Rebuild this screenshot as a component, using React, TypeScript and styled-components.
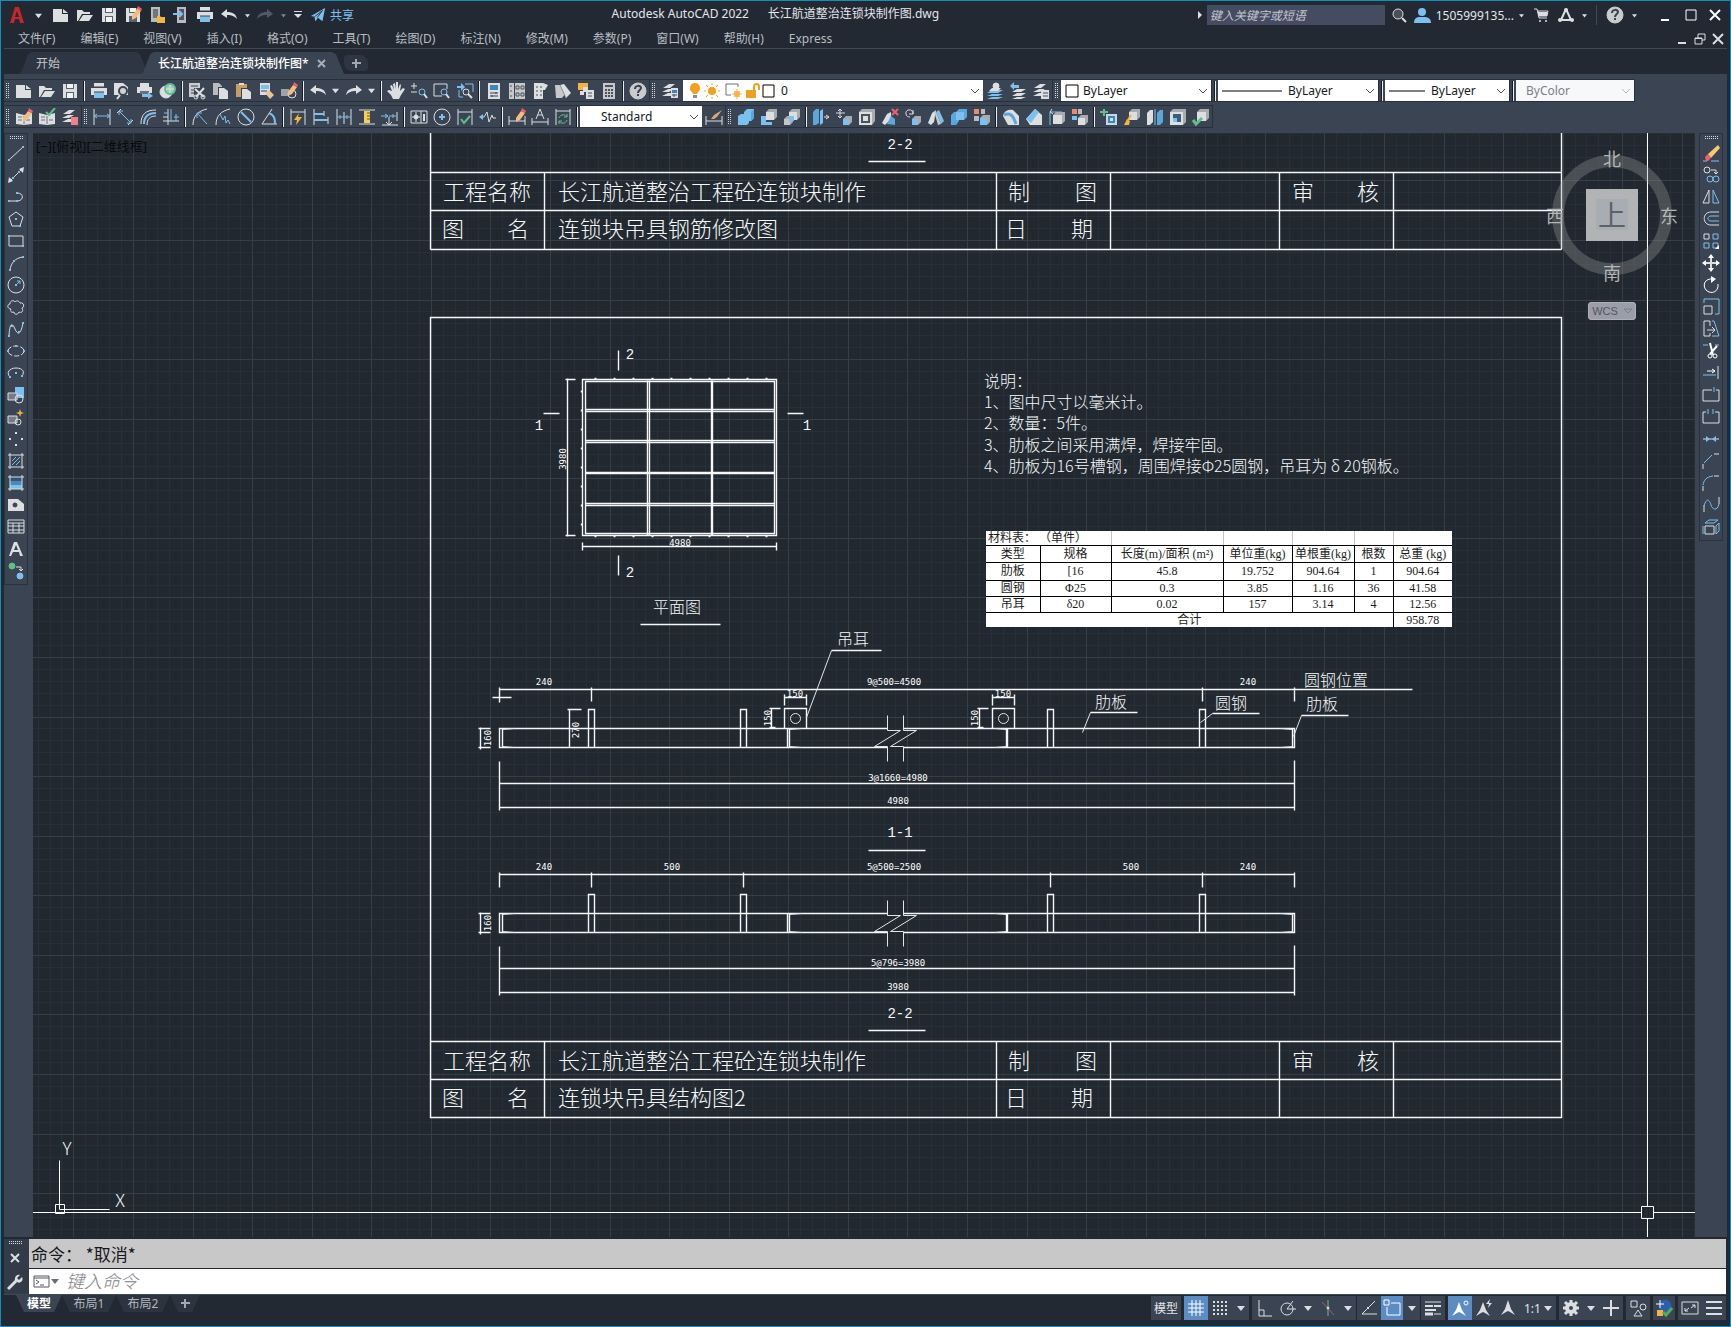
import React, { ReactNode } from "react";
import styled, { createGlobalStyle } from "styled-components";

const UI = `"Noto Sans", "Noto Sans CJK SC", sans-serif`;
const CAD = `"Noto Sans CJK SC", sans-serif`;
const SONG = `"Liberation Serif", "Noto Sans CJK SC", serif`;
const MARK = `"Liberation Mono", monospace`;
const DIM = `"DejaVu Sans Mono", monospace`;
const W = "#dcdee0";
const B = "#7cc0f0";
const O = "#f5b342";
const G = "#5fc08a";
const R = "#f0606a";
const PANEL = "#3b4453";
const DARK = "#222933";

const Global = createGlobalStyle`
  *, *::before, *::after { box-sizing: border-box; }
  body { margin: 0; background: ${DARK}; font-family: ${UI}; font-size: 12px; }
  button, input, select { font: inherit; color: inherit; border: 0; padding: 0; margin: 0; background: none; }
  button { display: inline-flex; align-items: center; justify-content: center; cursor: pointer; }
`;

/* ---------- window frame ---------- */

const Shell = styled.div`
  display: flex;
  flex-direction: column;
  min-height: 100vh;
  padding: 0 3px;
  border: 1px solid #1a8cba;
  background: ${DARK};
  color: #e4e6e8;
`;
const TitleBar = styled.header`
  display: flex;
  align-items: center;
  height: 28px;
`;
const QuickAccess = styled.div`
  display: flex;
  align-items: center;
  padding-left: 2px;
`;
const QuickButton = styled.button<{ $w?: number }>`
  width: ${(p) => p.$w ?? 24}px;
  height: 24px;
`;
const ShareButton = styled.button`
  gap: 4px;
  height: 24px;
  padding-left: 3px;
  color: ${B};
`;
const Caption = styled.h1`
  flex: 1;
  margin: 0;
  text-align: center;
  font-size: 12px;
  font-weight: 400;
  line-height: 20px;
  white-space: pre;
  padding-bottom: 2px;
`;
const TitleRight = styled.div`
  display: flex;
  align-items: center;
`;
const SearchBox = styled.input`
  width: 178px;
  height: 20px;
  margin: 0 2px 0 4px;
  padding: 0 3px;
  background: #434c60;
  font-style: italic;
  color: #e4e6e8;
  &::placeholder { color: #c3c7cf; opacity: 1; }
`;
const UserName = styled.button`
  height: 24px;
  padding-left: 1px;
`;
const Divider = styled.span`
  width: 1px;
  height: 20px;
  margin: 0 6px;
  background: #414955;
`;
const MenuRow = styled.div`
  display: flex;
  align-items: center;
  justify-content: space-between;
  height: 20px;
  border-bottom: 1px solid #414955;
`;
const Menus = styled.nav`
  display: flex;
  gap: 25px;
  padding-left: 14px;
  color: #b9bdc2;
`;
const MenuItem = styled.button`
  height: 18px;
  line-height: 18px;
`;
const DocControls = styled.div`
  display: flex;
`;
const DocButton = styled.button`
  width: 18px;
  height: 18px;
`;

/* ---------- document tabs ---------- */

const TabStrip = styled.div`
  display: flex;
  align-items: flex-end;
  height: 25px;
  padding-left: 14px;
`;
const FileTab = styled.div<{ $active?: boolean; $w: number }>`
  display: flex;
  align-items: center;
  gap: 8px;
  width: ${(p) => p.$w}px;
  height: 22px;
  margin-right: -8px;
  padding-left: 18px;
  background: ${(p) => (p.$active ? PANEL : "#2e3643")};
  color: ${(p) => (p.$active ? "#ffffff" : "#c3c7cc")};
  font-weight: ${(p) => (p.$active ? 500 : 400)};
  clip-path: polygon(0 100%, 3px 94%, 10px 10%, 14px 0, calc(100% - 12px) 0, calc(100% - 8px) 10%, 100% 100%);
`;
const AddTab = styled.button`
  width: 24px;
  height: 16px;
  margin: 0 0 3px 8px;
  border-radius: 4px 8px 4px 8px;
  background: #2e3643;
`;

/* ---------- toolbars ---------- */

const ToolbarArea = styled.div`
  display: flex;
  flex-direction: column;
  gap: 3px;
  padding: 5px 0;
  background: ${PANEL};
`;
const ToolbarRow = styled.div`
  display: flex;
  height: 23px;
`;
const Bar = styled.div`
  display: flex;
  align-items: center;
  height: 23px;
  border: 1px solid #28303c;
  border-left: 0;
`;
const Grip = styled.span<{ $flat?: boolean }>`
  flex: none;
  width: ${(p) => (p.$flat ? 13 : 4)}px;
  height: ${(p) => (p.$flat ? 4 : 15)}px;
  margin: ${(p) => (p.$flat ? "2px auto 2px" : "0 2px")};
  background:
    repeating-linear-gradient(90deg, transparent 0 1px, ${PANEL} 1px 2px),
    repeating-linear-gradient(#d4d8dd 0 1px, transparent 1px 2px);
`;
const Split = styled.span`
  flex: none;
  width: 2px;
  height: 20px;
  margin: 0 2px;
  background: linear-gradient(90deg, #171c24 1px, #eceef0 1px);
`;
const ToolButton = styled.button<{ $w?: number }>`
  flex: none;
  width: ${(p) => p.$w ?? 23}px;
  height: 21px;
`;
const Combo = styled.label<{ $w: number; $off?: boolean; $gap?: number }>`
  display: flex;
  align-items: center;
  gap: ${(p) => p.$gap ?? 4}px;
  width: ${(p) => p.$w}px;
  height: 21px;
  padding: 0 4px;
  background: ${(p) => (p.$off ? "#f7f8f9" : "#ffffff")};
  color: ${(p) => (p.$off ? "#7b7f85" : "#16181c")};
  button + & { margin-left: 2px; }
  & > svg { flex: none; }
`;
const Picker = styled.select<{ $pad?: number }>`
  flex: 1;
  min-width: 0;
  height: 20px;
  padding-left: ${(p) => p.$pad ?? 0}px;
  appearance: none;
  outline: 0;
  opacity: 1;
`;

/* ---------- work area ---------- */

const Work = styled.main`
  display: flex;
  flex: 1;
  background: ${PANEL};
`;
const SideStrip = styled.div<{ $w: number; $inset?: number }>`
  flex: none;
  width: ${(p) => p.$w}px;
  padding-left: ${(p) => p.$inset ?? 0}px;
`;
const SideBar = styled.div`
  display: flex;
  flex-direction: column;
  align-items: center;
  width: 24px;
  padding-bottom: 2px;
  border: 1px solid #2a323e;
`;
const SideButton = styled.button`
  width: 22px;
  height: 22px;
`;
const Canvas = styled.section`
  position: relative;
  flex: 1;
  min-height: 1104px;
  overflow: hidden;
  background: #212830;
`;
const Sheet = styled.svg`
  position: absolute;
  inset: 0;
  width: 100%;
  height: 100%;
`;
const CadLabel = styled.text<{ $size: number }>`
  font-family: ${CAD};
  font-size: ${(p) => p.$size}px;
  font-weight: 300;
  fill: #f6f7f8;
  white-space: pre;
`;
const MarkLabel = styled.text`
  font-family: ${MARK};
  font-size: 14px;
  fill: #f6f7f8;
`;
const DimLabel = styled.text`
  font-family: ${DIM};
  font-size: 9px;
  fill: #ffffff;
`;
const ViewLabel = styled.div`
  position: absolute;
  left: 3px;
  top: 4px;
  font-size: 13px;
  line-height: 18px;
  color: #07090c;
`;
const ViewCube = styled.div`
  position: absolute;
  top: 12px;
  right: 16px;
  display: flex;
  flex-direction: column;
  align-items: center;
  width: 134px;
`;
const WcsButton = styled.button`
  gap: 6px;
  width: 48px;
  height: 18px;
  margin-top: 14px;
  border-radius: 4px;
  background: #9b9da8;
  box-shadow: inset 0 0 0 1px #aeb0ba;
  color: #54565f;
  font-family: "Liberation Sans", sans-serif;
  font-size: 11px;
`;

const MaterialTable = styled.table`
  position: absolute;
  left: 953px;
  top: 398px;
  width: 466px;
  border-collapse: collapse;
  table-layout: fixed;
  background: #ffffff;
  color: #1c1c1c;
  font-family: ${SONG};
  font-size: 12px;
  line-height: 12px;
`;
const Row = styled.tr<{ $h: number }>`
  height: ${(p) => p.$h}px;
`;
const Cell = styled.td<{ $head?: boolean; $last?: boolean }>`
  padding: ${(p) => (p.$head ? "0 0 0 2px" : "0")};
  font-weight: 400;
  text-align: ${(p) => (p.$head ? "left" : "center")};
  white-space: nowrap;
  overflow: visible;
  border-left: 1px solid ${(p) => (p.$head ? "#c4c4c4" : "#000000")};
  border-bottom: ${(p) => (p.$last ? 0 : 1)}px solid #000000;
  &:first-child { border-left: 0; }
`;

/* ---------- command line & status ---------- */

const CommandPanel = styled.div`
  display: grid;
  grid-template-columns: 25px 1fr;
  margin-top: 2px;
  padding-right: 1px;
  background: ${DARK};
`;
const CommandSide = styled.div`
  display: flex;
  flex-direction: column;
  align-items: center;
  padding-right: 3px;
  background: #333b48;
`;
const SideTool = styled.button<{ $h: number }>`
  width: 22px;
  height: ${(p) => p.$h}px;
`;
const History = styled.output`
  display: block;
  height: 29px;
  padding-left: 2px;
  background: #c8c8c8;
  color: #16181b;
  font-size: 17px;
  line-height: 29px;
  font-family: "Noto Sans CJK SC", sans-serif;
  white-space: pre;
`;
const Prompt = styled.label`
  display: flex;
  align-items: center;
  gap: 4px;
  height: 25px;
  margin-top: 1px;
  padding-left: 4px;
  background: #ffffff;
`;
const CommandInput = styled.input`
  flex: 1;
  height: 24px;
  padding-left: 3px;
  padding-bottom: 3px;
  outline: 0;
  color: #16181b;
  font-size: 18px;
  line-height: 20px;
  font-style: italic;
  font-family: "Noto Sans CJK SC", sans-serif;
  &::placeholder { color: #808286; opacity: 1; font-weight: 300; }
`;
const Footer = styled.footer`
  display: flex;
  justify-content: space-between;
  height: 32px;
  border-top: 1px solid #414955;
`;
const LayoutTabs = styled.div`
  display: flex;
  padding-left: 12px;
`;
const LayoutTab = styled.button<{ $active?: boolean; $w: number }>`
  width: ${(p) => p.$w}px;
  height: 17px;
  line-height: 16px;
  background: ${(p) => (p.$active ? PANEL : "#2c3440")};
  color: ${(p) => (p.$active ? "#ffffff" : "#b4b8bd")};
  font-weight: ${(p) => (p.$active ? 700 : 400)};
  clip-path: polygon(0 0, 100% 0, calc(100% - 8px) 100%, 8px 100%);
`;
const Status = styled.div`
  display: flex;
  gap: 3px;
  padding-top: 1px;
  padding-right: 1px;
`;
const StatusGroup = styled.div<{ $tight?: boolean }>`
  display: flex;
  height: 24px;
  margin-left: ${(p) => (p.$tight ? -2 : 0)}px;
  background: ${PANEL};
`;
const StatusButton = styled.button<{ $w?: number; $on?: boolean }>`
  width: ${(p) => p.$w ?? 24}px;
  height: 24px;
  background: ${(p) => (p.$on ? "#5b8cc4" : "transparent")};
`;

/* ---------- icons ---------- */

const S = ({ d, c = W, w = 1 }: { d: string; c?: string; w?: number }) => (
  <path d={d} fill="none" stroke={c} strokeWidth={w} />
);
const F = ({ d, c = W }: { d: string; c?: string }) => <path d={d} fill={c} />;
const C = ({ x, y, r, c = W, f = "none", w = 1 }: { x: number; y: number; r: number; c?: string; f?: string; w?: number }) => (
  <circle cx={x} cy={y} r={r} stroke={c} fill={f} strokeWidth={w} />
);
const Dots = ({ at, c = B }: { at: number[][]; c?: string }) => (
  <>{at.map(([x, y]) => <rect key={`${x}-${y}`} x={x - 1} y={y - 1} width={2} height={2} fill={c} />)}</>
);
const Cube = ({ x, y, s, c = W, e = "#a9abad" }: { x: number; y: number; s: number; c?: string; e?: string }) => (
  <>
    <path d={`M${x} ${y + 3}l3-3h${s}v${s}l-3 3h-${s}z`} fill={e} />
    <path d={`M${x} ${y + 3}h${s}v${s}h-${s}z`} fill={c} />
  </>
);
const Pencil = () => (
  <>
    <F d="M8 10l5-7 4 2-5 7-4 2z" c="#f4bd7c" />
    <F d="M13 3l1-3 4 3-1 2z" c={R} />
  </>
);
const folder = "M1 15V4h5l2 2h6v2H6l-4 7zM3 15l4-6h10l-4 6z";
const floppy = "M2 2h14v14H2z";
const sheets = "M2 6l6-4h6l-5 4zM1 10l6-3h6l-5 3H1zM1 14l6-3h4v3H1z";

const icons: Record<string, ReactNode> = {
  new: <><F d="M1 3h9v5h6v8H1z" /><F d="M11 3l5 4h-5z" /></>,
  open: <F d={folder} />,
  save: <><F d={floppy} /><F d="M5 2h8v5H5zM5 10h8v6H5z" c="#5a616b" /><F d="M6 2h6v4H6zM6 11h6v5H6z" c="#f2f3f4" /></>,
  saveAs: <><F d={floppy} /><F d="M5 2h8v5H5zM5 10h8v6H5z" c="#5a616b" /><F d="M6 2h6v4H6z" c="#f2f3f4" /><Pencil /></>,
  phoneOpen: <><F d="M3 1h9v15H3z" c="#b9bbbe" /><F d="M5 3h5v9H5z" c="#70757c" /><F d="M9 10h3l1 1h4v6H9z" c={O} /></>,
  phoneIn: <><F d="M5 1h9v16H5z" c="#b9bbbe" /><F d="M7 3h5v11H7z" c="#50565f" /><S d="M1 8h9M7 5l3 3-3 3" c={B} w={2} /></>,
  print: <><F d="M4 1h10v4H4zM1 6h16v7H1z" /><F d="M4 10h10v6H4z" c={B} /><S d="M4 5h10M4 10h10" c="#3b4453" /></>,
  undo: <F d="M7 3v3c6 0 9 2 10 7-3-3-5-4-10-4v3L1 8z" />,
  redo: <F d="M11 3v3C5 6 2 8 1 13c3-3 5-4 10-4v3l6-4z" />,
  redoOff: <F d="M11 3v3C5 6 2 8 1 13c3-3 5-4 10-4v3l6-4z" c="#525964" />,
  plane: <><F d="M1 10L17 1l-3 15-5-4-3 4-1-5z" c={B} /><S d="M5 11l9-7-6 8" c={DARK} /></>,
  preview: <><F d="M1 1h9l5 4v8H1z" /><C x={10} y={9} r={4} c="#3b4453" f="#cfd1d3" w={2} /><S d="M7 13l-3 4" w={2} /></>,
  publish: <><F d="M4 1h9v4H4zM1 5h15v6H1z" /><F d="M4 9h9v3H4z" c="#6a7078" /><F d="M6 12h6v-2l5 4-5 3v-2H6z" c={B} /></>,
  globe: <><C x={7} y={10} r={6} f={W} /><C x={11} y={7} r={5} c={G} f="#8ed0d8" w={2} /><S d="M7 7h8M11 3v8" c="#f2e6a0" /></>,
  cut: <><F d="M1 1h11v5H6v9H1z" c="#c9cbcd" /><S d="M3 4h7M3 8h3M3 11h3" c="#3b4453" /><S d="M7 7l9 8M16 6l-8 9" w={2} /><C x={8} y={15} r={2} /><C x={15} y={15} r={2} /></>,
  copy: <><F d="M2 1h6l3 3v1H7v8H2z" c="#b9bbbe" /><F d="M8 6h5l4 3v8H8z" /></>,
  paste: <><F d="M2 2h11v4H7v9H2z" c="#c89c62" /><F d="M5 1h5v2H5z" /><F d="M8 7h5l4 3v7H8z" /></>,
  match: <><F d="M3 1h10v12H3z" /><F d="M4 3h8v4H4z" c={B} /><S d="M4 9h6" c="#3b4453" /><F d="M8 11l4-3 5 5-4 4z" c="#e9c590" /></>,
  block: <><F d="M1 7h8v7H1z" c="#9fa3a8" /><C x={12} y={12} r={4} /><Pencil /></>,
  hand: <F d="M5 9L3 4l2-1 2 5L6 2l2-1 1 6V0h2l0 7 2-5 1 1-1 6 3-3 2 1-4 6-2 4H6l-2-4-4-4 2-1z" />,
  zoomPm: <><S d="M1 4h6M4 1v6M1 10h6" /><C x={12} y={10} r={3} c={B} /><S d="M14 12l3 4" w={2} /></>,
  zoomWin: <><S d="M14 7V2H1v12h8" /><C x={11} y={10} r={3} c={B} /><S d="M13 12l3 4" w={2} /></>,
  zoomPrev: <><S d="M9 2h8v8M3 8v7h4" c={B} /><F d="M9 5L5 1v3H1v2h4v3z" c={B} /><C x={10} y={10} r={3} /><S d="M12 12l4 4" w={2} /></>,
  props: <><F d="M3 1h12v16H3z" /><F d="M5 3h8v5H5z" c="#3c86b8" /><S d="M5 11h8M5 14h8M11 10v2M7 13v2" c="#3b4453" /></>,
  design: <><F d="M1 1h5v16H1zM7 1h10v16H7z" c="#c6c8ca" /><S d="M8 4h3v3H8zM13 4h3v3h-3zM8 11h3v3H8zM13 11h3v3h-3zM3 3v2M3 8v2M3 13v2" c="#4b525d" /></>,
  palettes: <><F d="M3 1h9l5 2-3 5h-2v9H3z" /><S d="M5 5h2M9 5h2M5 9h2M9 9h2M5 13h2M9 13h2" c="#4b525d" /></>,
  sheetset: <><F d="M1 3h6l4 9-3 4H2z" c="#c6c8ca" /><F d="M6 3l4-1 7 9-5 5z" /><S d="M6 3l6 13" c="#8c9096" /></>,
  markup: <><F d="M1 1h10v7H1z" c={O} /><F d="M3 9h4v4H3zM6 5h5v5H6z" /><F d="M9 8h8v9H9z" /><S d="M11 11h4M11 14h4" c="#4b525d" /></>,
  calc: <><F d="M3 1h12v16H3z" c="#c6c8ca" /><S d="M5 4h8" c="#4b525d" w={2} /><S d="M5 8h2M8 8h2M11 8h2M5 11h2M8 11h2M11 11h2M5 14h2M8 14h2M11 14h2" c="#4b525d" w={2} /></>,
  help: <><C x={9} y={9} r={8} c="#c9cbcd" f="#c9cbcd" /><S d="M6 7c0-4 6-4 6-1 0 2-3 2-3 5" c="#39414e" w={2} /><F d="M8 12h2v2H8z" c="#39414e" /></>,
  layers: <><F d={sheets} /><F d="M10 6h7v10h-7z" /><F d="M11 8h5v3h-5z" c="#3c86b8" /><S d="M11 13h5M13 12v3" c="#4b525d" /></>,
  layerTop: <><F d="M1 11l5-3h11l-5 3zM1 14l5-2h11l-5 2zM1 17l5-2h11l-5 2z" c={B} /><F d="M3 9l3-3h9l-3 3z" /><C x={10} y={4} r={3} f={W} /></>,
  layerPrev: <><F d="M3 10l5-3h9l-5 3zM3 14l5-3h9l-5 3zM3 17l5-2h9l-5 2z" /><F d="M1 4l4-4v3h5v3H5v2z" c={B} /></>,
  layerState: <><F d={sheets} /><F d="M9 8h8v9H9z" /><S d="M11 11h5M11 14h5" c="#4b525d" /></>,
  bookEdit: <><F d="M1 5l8 2 8-2v11l-8 1-8-1z" /><S d="M9 8v8M3 9h4M3 12h4M11 12h4" c="#6b717a" /><Pencil /></>,
  bookCheck: <><F d="M1 5l8 2 8-2v11l-8 1-8-1z" /><S d="M9 8v8M3 9h4M3 12h4M11 12h4" c="#6b717a" /><S d="M8 4l3 3 6-7" c={G} w={2} /></>,
  layerDel: <><F d={sheets} /><F d="M10 9h7v8h-7z" c="#f0808a" /></>,
  dimLinear: <><S d="M1 1v16M17 1v16" /><S d="M1 8h16M4 6L1 8l3 2M14 6l3 2-3 2" c={B} /></>,
  dimAligned: <><S d="M1 5l4-4M12 17l5-5" /><S d="M3 3l12 12M3 7V3h4M15 11v4h-4" c={B} /></>,
  dimArc: <><S d="M2 16C2 7 6 2 17 2M8 17c0-6 3-9 9-9" /><S d="M5 16C5 9 9 5 17 5" c={B} w={2} /></>,
  dimOrd: <><S d="M6 1v16M1 13h16M1 9h5" /><S d="M9 1v12M12 9h5M14 6v7M2 5h4" c={B} /></>,
  dimRad: <><S d="M2 17C2 8 7 3 16 1" /><S d="M6 5l10 11M6 10V5h5" c={B} /></>,
  dimJog: <><S d="M2 17C2 8 7 3 16 1" /><S d="M6 6l3 6 2-4 1 7 2-3 2 4" c={B} /></>,
  dimDia: <><C x={9} y={9} r={8} /><S d="M4 4l10 10" c={B} w={2} /></>,
  dimAng: <><S d="M12 1L2 16h15" /><S d="M9 5c5 2 6 5 6 11" c={B} w={2} /></>,
  dimQuick: <><S d="M2 1v16M16 1v16M2 4h14" /><F d="M10 5l-5 7h3l-1 5 6-8H9z" c={O} /></>,
  dimBase: <><S d="M2 1v16M12 3v5M16 9v7" /><S d="M2 6h10M2 12h14" c={B} w={2} /></>,
  dimCont: <><S d="M2 1v16M9 4v12M16 1v16" /><S d="M2 9h14M5 7v4M12 7v4" c={B} /></>,
  dimSpace: <><S d="M1 2h16M1 16h16" /><F d="M6 3h6v12H6z" c="#f4cf5a" /><S d="M9 5h3M9 8h3M9 11h3" c="#6a5a20" /></>,
  dimBreak: <><S d="M8 9v8M5 14l3 3 3-3M1 17h16M16 4v9" /><S d="M0 8h7M15 8H8M4 6l3 2-3 2M12 6v4" c={B} /></>,
  tolerance: <><S d="M1 3h16v12H1zM11 3v12M2 9h8M6 4v10" /><S d="M14 6v7" w={2} /><C x={6} y={9} r={2} f={W} /></>,
  center: <><C x={9} y={9} r={8} /><S d="M9 6v6M6 9h6" c={B} w={2} /></>,
  inspect: <><S d="M2 1v16M16 1v16M2 4h14" /><S d="M5 11l3 4 6-7" c={G} w={2} /></>,
  jogLine: <><S d="M1 9h4l3-5 2 10 3-7 1 3h3" /><F d="M0 9l4-3v6z" c={B} /></>,
  dimEdit: <><S d="M1 8v9M17 8v9M1 13h16" /><Pencil /></>,
  dimTextEdit: <><S d="M1 10v7M17 10v7M1 14h16M5 11l4-10 4 10M7 7h4" /></>,
  dimUpdate: <><S d="M2 1v16M16 1v16M2 3h14" /><S d="M5 10c1-4 7-4 8-1M13 12c-1 4-7 4-8 1M13 6v3h-3M5 16v-3h3" c={G} /></>,
  dimStyle: <><S d="M1 8v9M17 8v9M1 13h16" /><F d="M6 11l3-4 8-5-5 7-3 2z" c="#d8a878" /></>,
  union: <><F d="M1 8l3-2h3V4l3-3h7v9l-3 3h-2v2l-2 2H1z" c={B} /><F d="M14 4l3-3v9l-3 3z" c="#5aa7dd" /></>,
  subtract: <><F d="M1 8h5v6h6v3H1z" c={B} /><Cube x={6} y={1} s={8} /></>,
  intersect: <><Cube x={6} y={1} s={8} /><Cube x={1} y={8} s={6} c="#c3c5c8" /><F d="M6 8h5v5H6z" c={B} /></>,
  extrudeF: <><F d="M1 4l3-3h3v14l-3 2H1z" c="#5aa7dd" /><F d="M8 3l3-2v14l-3 2z" c={B} /><S d="M12 9h5M14 7l3 2-3 2" /></>,
  moveF: <><S d="M5 1v9M1 5h9M3 3l2-2 2 2M3 8l2 2 2-2" /><Cube x={8} y={8} s={6} c={B} /></>,
  offsetF: <><F d="M1 4l3-3h13v12l-3 4H1z" c="#a9abad" /><F d="M1 4h13v13H1z" /><F d="M3 6h9v9H3z" c="#4b525d" /><F d="M5 8h5v5H5z" /></>,
  deleteF: <><F d="M1 15l5-9 4-2v7l-6 6z" /><F d="M6 16l4-8 4 3v6z" c="#5aa7dd" /><S d="M11 1l6 6M17 1l-6 6" c={R} w={2} /></>,
  rotateF: <><S d="M9 6c0-6-8-5-7 0 0 2 2 3 4 3M9 2v4H5" /><Cube x={8} y={8} s={6} c={B} /></>,
  taperF: <><F d="M1 15l4-10 4-3-2 12-3 3z" /><F d="M9 4l3-2 5 11-3 3z" c={B} /><F d="M7 3l2 1 5 12-3 1z" c="#c6c8ca" /></>,
  colorF: <><F d="M1 7l3-3h5v9l-3 4H1z" c="#5aa7dd" /><Cube x={6} y={1} s={8} c={B} e="#5aa7dd" /></>,
  copyF: <><F d="M1 1h5v5H1z" c="#e88a72" /><F d="M8 1h4v5H8z" c="#b9bbbe" /><F d="M1 8h5v5H1z" c="#b9bbbe" /><Cube x={7} y={7} s={7} c={B} /></>,
  filletE: <><F d="M1 8c1-5 5-7 10-6l6 6v9H6z" /><S d="M2 7c6-3 9 0 12 9" c="#5aa7dd" w={3} /></>,
  chamferE: <><F d="M1 11l9-10 7 6v10H5z" /><F d="M1 11l9-10 4 3-8 11z" c={B} /></>,
  copyE: <><S d="M2 17V4h12" c={B} /><S d="M4 1L2 4l3 2" /><Cube x={5} y={4} s={9} /></>,
  colorE: <><F d="M1 1h5v5H1z" c="#e88a72" /><F d="M7 1h4v5H7z" c="#b9bbbe" /><F d="M1 8h5v4H1z" c={B} /><Cube x={7} y={7} s={7} /></>,
  imprint: <><S d="M4 1v7M0 4h8" c={G} w={2} /><F d="M6 6h11v11H6z" c="#c6d8e6" /><F d="M8 8h7v7H8z" c="#3c86b8" /><F d="M10 10h3v3h-3z" /></>,
  clean: <><Cube x={6} y={1} s={8} /><F d="M1 17l3-6 3 2-1 4z" c={O} /><S d="M5 12l3-5" c={O} w={2} /></>,
  separate: <><F d="M1 5l3-3h3v12l-3 3H1z" /><F d="M11 5l3-3h3v12l-3 3h-3z" c="#5aa7dd" /><S d="M9 1v16" c={B} /></>,
  shell: <><Cube x={1} y={1} s={13} /><F d="M4 6h8v8H4z" c="#3b5d7c" /><F d="M4 10h4v4H4z" c={B} /></>,
  check: <><Cube x={5} y={1} s={9} /><S d="M1 12l3 4 6-6" c={G} w={3} /></>,

  line: <><S d="M2 16L16 3" /><Dots at={[[2, 16], [16, 3]]} /></>,
  xline: <><S d="M4 14L14 4" /><F d="M1 17l1-6 4 4zM17 1l-1 6-4-4z" /><Dots at={[[6, 12], [12, 6]]} /></>,
  pline: <><S d="M2 13h9c6-1 6-8-1-8" /><Dots at={[[2, 13], [10, 13], [10, 5]]} /></>,
  polygon: <><S d="M9 2l7 5-3 9H5L2 7z" /><Dots at={[[9, 9], [13, 16]]} /></>,
  rect: <><S d="M2 4h14v10H2z" /><Dots at={[[2, 4], [16, 14]]} /></>,
  arc: <><S d="M3 16C4 9 8 4 16 3" /><Dots at={[[3, 16], [7, 7], [16, 3]]} /></>,
  circle: <><C x={9} y={9} r={8} /><S d="M9 9l4-4M10 5h3v3" c={B} /><Dots at={[[9, 9]]} /></>,
  cloud: <S d="M4 11c-4 0-4-5-1-5 0-4 4-4 5-2 2-2 4-1 5 1 4-1 5 4 2 5 2 4-1 5-3 4-1 3-5 3-5 0-3 1-4-1-3-3z" />,
  spline: <><S d="M2 15C3 3 5 2 8 9s6 5 8-6" /><Dots at={[[2, 16], [5, 6], [12, 12], [16, 3]]} /></>,
  ellipse: <><ellipse cx={9} cy={9} rx={8} ry={5} fill="none" stroke={W} strokeDasharray="5 2" /><Dots at={[[9, 4], [1, 9], [17, 9]]} /></>,
  ellArc: <><S d="M3 13C-1 9 2 4 9 4s9 4 6 8" /><Dots at={[[3, 13], [15, 12], [9, 9]]} /></>,
  insert: <><F d="M8 1h9v11H8z" c={B} /><F d="M1 7h9v7H1z" c="#767c85" /><S d="M1 7h9v7H1z" /><C x={12} y={13} r={4} /></>,
  make: <><F d="M1 8h9v7H1z" c="#767c85" /><S d="M1 8h9v7H1z" /><C x={11} y={14} r={3} /><F d="M13 1l1 3 3 1-3 1-1 3-1-3-3-1 3-1z" c={O} /></>,
  point: <Dots c={W} at={[[9, 3], [3, 9], [15, 9], [9, 15]]} />,
  hatch: <><S d="M3 1v16M15 1v16M1 3h16M1 15h16" /><S d="M5 9l4-4M5 13l8-8M9 13l4-4" c={B} /></>,
  gradient: <><F d="M3 3h12v12H3z" c="#2f567c" /><F d="M3 7h12v4H3z" c="#4e88b8" /><F d="M3 11h12v4H3z" c={B} /><S d="M3 1v16M15 1v16M1 3h16M1 15h16" /></>,
  region: <><F d="M1 3h10l6 5v7H1z" /><C x={8} y={9} r={2} c={PANEL} f={PANEL} /></>,
  table: <S d="M1 2h16v13H1zM1 5h16M1 8h16M1 12h16M6 5v10M12 5v10" />,
  mtext: <F d="M7 2h3l6 14h-3l-1-4H6l-2 4H2zM9 5l-2 5h4z" />,
  addsel: <><C x={5} y={4} r={3} c={G} f={G} /><C x={13} y={14} r={3} c={B} f={B} /><S d="M9 5h5v4M12 7l2 2 2-2" /></>,

  erase: <><S d="M1 17h4M9 17h8" c={B} /><F d="M6 10L16 1l2 3-9 10z" c="#f7c96c" /><F d="M3 13l3-3 3 4-3 3H4z" c={R} /></>,
  copyObj: <><C x={5} y={4} r={3} /><S d="M9 4h5v4M12 6l2 2 2-2" /><C x={8} y={13} r={3} c={B} /><C x={14} y={13} r={3} c={B} /></>,
  mirror: <><S d="M7 2v13H1z" /><S d="M11 2v13h6z" c={B} /></>,
  offset: <><S d="M17 2H9c-9 0-9 13 0 13h8" /><S d="M17 6H9c-4 0-4 5 0 5h8" c={B} /></>,
  array: <><S d="M2 2h5v5H2z" /><S d="M11 2h5v5h-5zM2 11h5v5H2zM11 11h5v5h-5z" c={B} /><F d="M17 13v4h-4z" c="#fff" /></>,
  move: <><S d="M9 2v14M2 9h14" w={2} /><F d="M9 0l3 4H6zM9 18l3-4H6zM0 9l4-3v6zM18 9l-4-3v6z" c="#fff" /></>,
  rotate: <><S d="M11 3C3 2 0 9 4 14c5 5 13 2 12-6" c="#fff" /><F d="M9 0l5 3-5 4z" c="#fff" /></>,
  scale: <><S d="M2 8h8v8H2z" /><S d="M2 5V1h15v15h-4" c={B} /></>,
  stretch: <><S d="M8 6V1H2v15h6v-3M5 10h8M10 7l3 3-3 3" /><S d="M10 1h2l5 15h-7" c={B} /></>,
  trim: <><S d="M1 3h5M13 3h4" c={B} /><S d="M8 1l3 12M15 4l-7 8" c="#fff" w={2} /><C x={8} y={14} r={2} c="#fff" /><C x={13} y={14} r={2} c="#fff" /></>,
  extend: <><S d="M5 7h8M10 5l3 2-3 2" c="#fff" /><S d="M1 11h13" c={B} /><S d="M16 2v13" /></>,
  breakPt: <><S d="M10 4H1v11h16V4h-3" /><S d="M12 1v5" c={B} /></>,
  breakObj: <><S d="M4 4H1v11h16V4h-4" /><S d="M6 1v5M11 1v5" c={B} /></>,
  join: <><S d="M1 9h16" /><F d="M8 9L4 6v6zM10 9l4-3v6z" c={B} /></>,
  chamfer: <><S d="M1 17v-5M12 2h5" /><S d="M2 11l8-8" c={B} /></>,
  fillet: <><S d="M1 17v-5M12 2h5" /><S d="M1 11C2 6 4 3 11 2" c={B} /></>,
  blend: <><S d="M2 16V9M17 1v7" /><S d="M2 10C5 0 8 5 9 9s6 7 8-1" c={B} /></>,
  explode: <><S d="M3 8h9v8H3z" /><S d="M3 5l4-3h9l-4 3zM14 8l3-3v8l-3 3zM1 8v8" c={B} /></>,
};

const Icon = ({ n, size = 18 }: { n: string; size?: number }) => (
  <svg width={size} height={size} viewBox="0 0 18 18" aria-hidden="true">{icons[n]}</svg>
);
const Caret = ({ w = 8, c = W }: { w?: number; c?: string }) => (
  <svg width={w} height={w} viewBox="0 0 8 8" aria-hidden="true"><path d="M0 2h8L4 7z" fill={c} /></svg>
);
const Chevron = ({ c = "#4a4e54" }: { c?: string }) => (
  <svg width="8" height="8" viewBox="0 0 8 8" aria-hidden="true"><path d="M0 2l4 4 4-4" fill="none" stroke={c} /></svg>
);

/* ---------- toolbar data ---------- */

type Item = string;
const standard: Item[] = ["new", "open", "save", "|", "print", "preview", "publish", "globe", "|", "cut", "copy", "paste", "match", "block", "|", "undo", "v", "redo", "v", "|", "hand", "zoomPm", "zoomWin", "zoomPrev", "|", "props", "design", "palettes", "sheetset", "markup", "calc", "|", "help"];
const refEdit: Item[] = ["bookEdit", "bookCheck", "layerDel"];
const dims: Item[] = ["dimLinear", "dimAligned", "dimArc", "dimOrd", "|", "dimRad", "dimJog", "dimDia", "dimAng", "|", "dimQuick", "dimBase", "dimCont", "dimSpace", "dimBreak", "|", "tolerance", "center", "inspect", "jogLine", "|", "dimEdit", "dimTextEdit", "dimUpdate", "|"];
const solids: Item[] = ["union", "subtract", "intersect", "|", "extrudeF", "moveF", "offsetF", "deleteF", "rotateF", "taperF", "colorF", "copyF", "|", "filletE", "chamferE", "copyE", "colorE", "|", "imprint", "clean", "separate", "shell", "check"];
const draw: Item[] = ["line", "xline", "pline", "polygon", "rect", "arc", "circle", "cloud", "spline", "ellipse", "ellArc", "insert", "make", "point", "hatch", "gradient", "region", "table", "mtext", "addsel"];
const modify: Item[] = ["erase", "copyObj", "mirror", "offset", "array", "move", "rotate", "scale", "stretch", "trim", "extend", "breakPt", "breakObj", "join", "chamfer", "fillet", "blend", "explode"];
const menus = ["文件(F)", "编辑(E)", "视图(V)", "插入(I)", "格式(O)", "工具(T)", "绘图(D)", "标注(N)", "修改(M)", "参数(P)", "窗口(W)", "帮助(H)", "Express"];

const Tools = ({ items }: { items: Item[] }) => (
  <>
    {items.map((n, i) =>
      n === "|" ? <Split key={i} /> :
      n === "v" ? <ToolButton key={i} $w={13} aria-label="展开"><Caret w={7} /></ToolButton> :
      <ToolButton key={i} aria-label={n}><Icon n={n} /></ToolButton>
    )}
  </>
);

/* ---------- drawing ---------- */

const Grid = () => {
  const step = 59.57;
  const lines: ReactNode[] = [];
  for (let pass = 0; pass < 2; pass++) {
    for (let i = -10; i < 180; i++) {
      if ((i % 5 === 0) !== (pass === 1)) continue;
      const x = Math.round(74.4 + (i * step) / 5);
      const y = Math.round(181.4 + (i * step) / 5);
      const c = pass ? "#363e47" : "#272f38";
      lines.push(<path key={`x${i}`} d={`M${x} 0v3000`} stroke={c} />);
      lines.push(<path key={`y${i}`} d={`M0 ${y}h4000`} stroke={c} />);
    }
  }
  return <g>{lines}</g>;
};

const sectionLines = (dy: number) => {
  const y = (n: number) => n + dy;
  return [
    // beam outline with the break in the middle
    `M887 ${y(728)}H499V${y(747)}H887M903 ${y(728)}H1294V${y(747)}H903M502 ${y(728)}v19M1292 ${y(728)}v19`,
    `M787 ${y(728)}v19M789 ${y(728)}v19M1007 ${y(728)}v19M1006 ${y(728)}v19`,
    // round bars
    ...[588, 740, 1047, 1199].map((x) => `M${x} ${y(747)}V${y(709)}h6V${y(747)}`),
    // height dimension on the left
    `M480 ${y(727)}v22M478 ${y(728)}h12M478 ${y(747)}h12`,
    // lower dimensions
    `M499 ${y(761)}v49M1294 ${y(760)}v50M499 ${y(783)}H1294M499 ${y(807)}H1294`,
  ].join("");
};
// chamfered channel ends inside the beam
const chamfers = (dy: number) =>
  [[502, 1], [789, 1], [1006, -1], [1292, -1]]
    .map(([x, k]) => `M${x} ${729 + dy}l${k * 12}-1M${x} ${746 + dy}l${k * 12} 1`)
    .join("");
const breakLines = (dy: number) =>
  [887, 903].map((x) => `M${x} ${715 + dy}v15h13l-26 16h13v15`).join("");

const cols = [430, 544, 996, 1110, 1279, 1393];
const titleBlock = (top: number, bottom: number) =>
  `M430 ${top}H1561M430 ${top + 38}H1561M430 ${bottom}H1561` + cols.slice(1).map((x) => `M${x} ${top}V${bottom}`).join("");

const range = (n: number) => Array.from({ length: n }, (_, i) => i);

const plan = [
  "M582 379H776V535H582zM585 381H774V533H585z",
  "M647 380V535M649 380V535M711 380V535M712 380V535",
  "M585 409H774M585 411H774M585 440H774M585 442H774M585 472H774M585 473H774M585 503H774M585 505H774",
  ...range(10).map((i) => `M${594 + i * 19} 378h2M${594 + i * 19} 536h2`),
  ...range(8).map((i) => `M581 ${390 + i * 19}v2`),
  "M567 378V536M565 379h10M565 535h10M582 546H776M582 542v8M776 542v8",
  "M618 350v20M618 555v20M543 413h16M787 413h16M640 624h80",
].join("");

const section1 = [
  "M499 689H1412M499 687v15M591 687v14M1202 687v14M1294 687v14M492 697h19",
  "M784 728V708h22v20M992 728V708h22v20",
  "M784 697h22M784 694v11M806 694v11M992 697h22M992 694v11M1014 694v11",
  "M771 708v20M769 708h11M769 727h6M979 708v20M977 708h11M977 727h6",
  "M569 709v38M567 709h14M831 650h50M1090 712h47M1212 713h47M1301 715h47M868 850h57",
].join("");
const section2 = "M499 874H1294M868 1030h57M868 161h57" + [499, 591, 743, 1050, 1202, 1294].map((x) => `M${x} 872v15`).join("");
const leaders = "M831 650L806 717M1090 712L1082 732M1212 713L1200 722M1301 715L1293 736";

const T = ({ x, y, s = 16, a = "start", children }: { x: number; y: number; s?: number; a?: "start" | "middle"; children: ReactNode }) => (
  <CadLabel $size={s} x={x} y={y} textAnchor={a}>{children}</CadLabel>
);
const M = ({ x, y, children }: { x: number; y: number; children: ReactNode }) => (
  <MarkLabel x={x} y={y} textAnchor="middle">{children}</MarkLabel>
);
const D = ({ x, y, up, children }: { x: number; y: number; up?: boolean; children: ReactNode }) => (
  <DimLabel x={x} y={y + 3} textAnchor="middle" transform={up ? `rotate(-90 ${x} ${y})` : undefined}>{children}</DimLabel>
);
const BlockText = ({ top, name }: { top: number; name: string }) => (
  <>
    <T x={443} y={top + 28} s={22}>工程名称</T>
    <T x={558} y={top + 28} s={22}>长江航道整治工程砼连锁块制作</T>
    <T x={1008} y={top + 28} s={22}>制</T><T x={1075} y={top + 28} s={22}>图</T>
    <T x={1292} y={top + 28} s={22}>审</T><T x={1357} y={top + 28} s={22}>核</T>
    <T x={442} y={top + 65} s={22}>图</T><T x={507} y={top + 65} s={22}>名</T>
    <T x={558} y={top + 65} s={22}>{name}</T>
    <T x={1005} y={top + 65} s={22}>日</T><T x={1071} y={top + 65} s={22}>期</T>
  </>
);

const notes: [number, string][] = [
  [387, "说明\uff1a"],
  [408, "1、图中尺寸以毫米计。"],
  [429, "2、数量\uff1a5件。"],
  [451, "3、肋板之间采用满焊\uff0c焊接牢固。"],
  [472, "4、肋板为16号槽钢\uff0c周围焊接Φ25圆钢\uff0c吊耳为 δ 20钢板。"],
];

const Drawing = () => (
  <Sheet role="img" aria-label="图纸">
    <g transform="translate(-32.5 -132.5)">
      <g transform="translate(-1 -1)"><Grid /></g>
      <g fill="none" stroke="#f6f7f8" strokeWidth="1.4">
        <path d={`M430 100V249M1561 100V249${titleBlock(172, 249)}`} />
        <path d={`M430 317H1561V1117H430z${titleBlock(1041, 1117)}`} />
        <path d={plan} />
        <path d={sectionLines(0) + section1} />
        <path d={sectionLines(185) + section2} />
      </g>
      <g fill="none" stroke="#ffffff">
        <path d="M59 1160v49h50M55 1204h9v9h-9z" />
        <path d="M0 1212H1641M1653 1212H4000M1647 0V1206M1647 1218V3000M1641 1206h12v12h-12z" />
      </g>
      <g fill="none" stroke="#e2e4e6">
        <path d={leaders + breakLines(0) + breakLines(185) + chamfers(0) + chamfers(185)} />
        <circle cx={795} cy={718} r={5} />
        <circle cx={1003} cy={718} r={5} />
      </g>
    </g>
    <g transform="translate(-33 -133)">
      <M x={900} y={149}>2-2</M>
      <BlockText top={172} name="连锁块吊具钢筋修改图" />
      <BlockText top={1041} name="连锁块吊具结构图2" />
      <M x={630} y={359}>2</M><M x={630} y={577}>2</M>
      <M x={539} y={430}>1</M><M x={807} y={430}>1</M>
      <T x={653} y={613}>平面图</T>
      <T x={853} y={645} a="middle">吊耳</T>
      {notes.map(([y, text]) => <T key={y} x={984} y={y}>{text}</T>)}
      <T x={1111} y={708} a="middle">肋板</T>
      <T x={1231} y={709} a="middle">圆钢</T>
      <T x={1322} y={710} a="middle">肋板</T>
      <T x={1336} y={686} a="middle">圆钢位置</T>
      <M x={900} y={837}>1-1</M>
      <M x={900} y={1018}>2-2</M>
      <D x={563} y={459} up>3980</D><D x={680} y={543}>4980</D>
      <D x={544} y={682}>240</D><D x={894} y={682}>9@500=4500</D><D x={1248} y={682}>240</D>
      <D x={795} y={694}>150</D><D x={1003} y={694}>150</D>
      <D x={768} y={718} up>150</D><D x={975} y={718} up>150</D>
      <D x={576} y={730} up>270</D><D x={488} y={738} up>160</D>
      <D x={898} y={778}>3@1660=4980</D><D x={898} y={801}>4980</D>
      <D x={544} y={867}>240</D><D x={672} y={867}>500</D><D x={894} y={867}>5@500=2500</D>
      <D x={1131} y={867}>500</D><D x={1248} y={867}>240</D>
      <D x={488} y={923} up>160</D><D x={898} y={963}>5@796=3980</D><D x={898} y={987}>3980</D>
      <T x={67} y={1155} s={18} a="middle">Y</T>
      <T x={120} y={1207} s={18} a="middle">X</T>
    </g>
  </Sheet>
);

const tableRows = [
  { h: 18, v: ["肋板", "[16", "45.8", "19.752", "904.64", "1", "904.64"] },
  { h: 16, v: ["圆钢", "Φ25", "0.3", "3.85", "1.16", "36", "41.58"] },
  { h: 16, v: ["吊耳", "δ20", "0.02", "157", "3.14", "4", "12.56"] },
];

const Materials = () => (
  <MaterialTable>
    <colgroup>{[54, 71, 112, 69, 62, 39, 59].map((w, i) => <col key={i} width={w} />)}</colgroup>
    <tbody>
      <Row $h={14}><Cell $head colSpan={2}>{"材料表\uff1a \uff08单件\uff09"}</Cell>{range(5).map((i) => <Cell $head key={i} />)}</Row>
      <Row $h={17}>
        {["类型", "规格", "长度(m)/面积 (m²)", "单位重(kg)", "单根重(kg)", "根数", "总重 (kg)"].map((h) => <Cell as="th" key={h}>{h}</Cell>)}
      </Row>
      {tableRows.map((r) => <Row $h={r.h} key={r.v[0]}>{r.v.map((v, i) => <Cell key={i}>{v}</Cell>)}</Row>)}
      <Row $h={15}><Cell $last colSpan={6}>合计</Cell><Cell $last>958.78</Cell></Row>
    </tbody>
  </MaterialTable>
);

const Compass = () => (
  <ViewCube>
    <svg width="134" height="143" viewBox="0 0 134 143" fontFamily={`"Noto Sans CJK SC", sans-serif`} fontSize="18" fill="#b4b6b8" textAnchor="middle">
      <circle cx="67" cy="70" r="54" fill="none" stroke="#a0a2a0" strokeOpacity="0.32" strokeWidth="12" />
      <rect x="41" y="44" width="52" height="52" fill="#b2b3b4" />
      <rect x="51" y="54" width="32" height="31" fill="#a7adb3" />
      <text x="67" y="81" fontSize="28" fill="#5c6268">上</text>
      <text x="67" y="21">北</text>
      <text x="67" y="135">南</text>
      <text x="10" y="78">西</text>
      <text x="124" y="78">东</text>
    </svg>
    <WcsButton>WCS<svg width="8" height="6" viewBox="0 0 8 6"><path d="M0 1h8L4 5z" fill="none" stroke="#7d7f88" /></svg></WcsButton>
  </ViewCube>
);

/* ---------- status bar glyphs ---------- */

const Glyph = ({ children }: { children: ReactNode }) => (
  <svg width="18" height="18" viewBox="0 0 18 18" aria-hidden="true">{children}</svg>
);
const scaleA = "M9 1l3 9 4 6-5-3-2-1-2 1-5 3 4-6z";

const StatusBar = () => (
  <Status>
    <StatusGroup><StatusButton $w={30}>模型</StatusButton></StatusGroup>
    <StatusGroup>
      <StatusButton $on aria-label="栅格"><Glyph><S d="M5 1v16M9 1v16M13 1v16M1 5h16M1 9h16M1 13h16" c="#fff" /></Glyph></StatusButton>
      <StatusButton aria-label="捕捉"><Glyph><Dots c={W} at={[3, 7, 11, 15].flatMap((x) => [3, 7, 11, 15].map((y) => [x, y]))} /></Glyph></StatusButton>
      <StatusButton $w={17} aria-label="捕捉选项"><Caret /></StatusButton>
    </StatusGroup>
    <StatusGroup>
      <StatusButton aria-label="正交"><Glyph><S d="M4 1v16h13M4 11h5v6" /></Glyph></StatusButton>
      <StatusButton aria-label="极轴"><Glyph><C x={8} y={10} r={6} /><S d="M8 10h9M8 10l6-8" /></Glyph></StatusButton>
      <StatusButton $w={16} aria-label="极轴选项"><Caret /></StatusButton>
      <StatusButton aria-label="等轴测"><Glyph><S d="M9 1v16" c={G} /><S d="M3 3l12 13" c="#b8586a" /><C x={9} y={9} r={1} f={W} /></Glyph></StatusButton>
      <StatusButton $w={16} aria-label="等轴测选项"><Caret /></StatusButton>
    </StatusGroup>
    <StatusGroup $tight>
      <StatusButton aria-label="追踪"><Glyph><S d="M15 2L2 15h15" /><Dots c={W} at={[[8, 9]]} /></Glyph></StatusButton>
      <StatusButton $on $w={22} aria-label="对象捕捉"><Glyph><S d="M8 4h9v12H4V8" c="#fff" /><S d="M1 1h5v5H1z" c="#fff" /></Glyph></StatusButton>
      <StatusButton $w={17} aria-label="对象捕捉选项"><Caret /></StatusButton>
    </StatusGroup>
    <StatusGroup $tight><StatusButton aria-label="线宽"><Glyph><S d="M1 3h16" /><S d="M1 7h8M1 11h11M10 7h7" w={2} /><S d="M1 15h8" w={3} /><S d="M10 15h7" /></Glyph></StatusButton></StatusGroup>
    <StatusGroup>
      <StatusButton $on aria-label="注释可见性"><Glyph><F d="M8 3l3 8 4 6-5-3-2-1-2 1-5 3 4-6z" c="#fff" /><C x={15} y={4} r={2} c="#fff" /></Glyph></StatusButton>
      <StatusButton aria-label="自动缩放"><Glyph><F d="M8 3l3 8 4 6-5-3-2-1-2 1-5 3 4-6z" /><F d="M15 0l-4 5h3l-1 4 4-5h-3z" /></Glyph></StatusButton>
      <StatusButton aria-label="注释比例"><Glyph><F d={scaleA} /></Glyph></StatusButton>
      <StatusButton $w={36}>1:1&nbsp;<Caret /></StatusButton>
    </StatusGroup>
    <StatusGroup>
      <StatusButton aria-label="工作空间"><Glyph><C x={9} y={9} r={4} w={4} /><S d="M9 1v3M9 14v3M1 9h3M14 9h3M3 3l3 3M12 12l3 3M15 3l-3 3M6 12l-3 3" w={3} /></Glyph></StatusButton>
      <StatusButton $w={16} aria-label="工作空间选项"><Caret /></StatusButton>
      <StatusButton aria-label="注释监视器"><Glyph><S d="M9 1v16M1 9h16" w={2} /></Glyph></StatusButton>
    </StatusGroup>
    <StatusGroup><StatusButton aria-label="隔离对象"><Glyph><S d="M2 2h6v6H2zM9 11l4 6H5z" /><C x={14} y={8} r={3} /></Glyph></StatusButton></StatusGroup>
    <StatusGroup><StatusButton $w={22} aria-label="硬件加速"><Glyph><C x={10} y={7} r={6} c="#2c5fae" f="#2c5fae" /><S d="M5 1v8M1 5h8" c="#fff" /><F d="M2 11h6v6H2z" c={O} /><S d="M8 13l3 3 6-7" c="#4fae5a" w={3} /></Glyph></StatusButton></StatusGroup>
    <StatusGroup>
      <StatusButton aria-label="全屏显示"><Glyph><S d="M1 3h16v12H1zM4 9v3h3M14 9V6h-3M4 12l4-3M14 6l-4 3" /></Glyph></StatusButton>
      <StatusButton aria-label="自定义"><Glyph><S d="M1 3h16M1 9h16M1 15h16" w={2} /></Glyph></StatusButton>
    </StatusGroup>
  </Status>
);

/* ---------- app ---------- */

export default function App() {
  return (
    <>
      <Global />
      <Shell>
        <TitleBar>
          <QuickAccess>
            <QuickButton $w={22} aria-label="应用程序菜单">
              <svg width="14" height="18" viewBox="0 0 14 18"><path d="M5 1h4l5 16h-4l-1-4H5l-1 4H0zM7 5l-2 6h4z" fill="#c2262e" /></svg>
            </QuickButton>
            <QuickButton $w={21} aria-label="菜单"><Caret w={7} /></QuickButton>
            {["new", "open", "save", "saveAs", "phoneOpen", "phoneIn", "print", "undo"].map((n) => (
              <QuickButton key={n} aria-label={n}><Icon n={n} /></QuickButton>
            ))}
            <QuickButton $w={12} aria-label="放弃列表"><Caret w={5} /></QuickButton>
            <QuickButton aria-label="重做"><Icon n="redoOff" /></QuickButton>
            <QuickButton $w={12} aria-label="重做列表"><Caret w={5} c="#80858d" /></QuickButton>
            <QuickButton $w={18} aria-label="自定义快速访问工具栏">
              <svg width="8" height="10" viewBox="0 0 8 10"><path d="M0 1h8v1H0zM0 4h8L4 8z" fill={W} /></svg>
            </QuickButton>
            <ShareButton><Icon n="plane" size={16} />共享</ShareButton>
          </QuickAccess>
          <Caption>{"Autodesk AutoCAD 2022      长江航道整治连锁块制作图.dwg"}</Caption>
          <TitleRight>
            <svg width="6" height="8" viewBox="0 0 6 8"><path d="M1 0l4 4-4 4z" fill={W} /></svg>
            <SearchBox type="search" aria-label="搜索" placeholder="键入关键字或短语" />
            <QuickButton aria-label="搜索">
              <svg width="16" height="16" viewBox="0 0 16 16"><circle cx="7" cy="7" r="5" fill="#4a5058" stroke={W} strokeWidth="1" /><path d="M11 11l4 4" stroke={W} strokeWidth="2" /></svg>
            </QuickButton>
            <QuickButton aria-label="账户">
              <svg width="17" height="17" viewBox="0 0 17 17"><circle cx="8" cy="5" r="4" fill={B} /><path d="M0 16c0-6 4-6 8-6s9 0 9 6z" fill={B} /></svg>
            </QuickButton>
            <UserName>1505999135...</UserName>
            <QuickButton $w={14} aria-label="账户列表"><Caret w={5} /></QuickButton>
            <QuickButton $w={26} aria-label="应用商店">
              <svg width="15" height="15" viewBox="0 0 15 15"><path d="M0 1h3l2 9h8M4 3h10l-1 5H5z" fill="none" stroke={W} /><path d="M4 4h9v4H5z" fill={W} /><circle cx="6" cy="13" r="1" fill={W} /><circle cx="12" cy="13" r="1" fill={W} /></svg>
            </QuickButton>
            <QuickButton aria-label="Autodesk">
              <svg width="16" height="16" viewBox="0 0 16 16"><path d="M8 2L3 13M8 2l5 11M2 13h12" fill="none" stroke={W} strokeWidth="2" /><circle cx="8" cy="3" r="2" fill={W} /><circle cx="2" cy="13" r="2" fill={W} /><circle cx="14" cy="13" r="2" fill={W} /></svg>
            </QuickButton>
            <QuickButton $w={12} aria-label="Autodesk 列表"><Caret w={5} /></QuickButton>
            <Divider />
            <QuickButton aria-label="帮助"><Icon n="help" /></QuickButton>
            <QuickButton $w={14} aria-label="帮助列表"><Caret w={5} /></QuickButton>
            <QuickButton $w={38} aria-label="最小化"><svg width="28" height="14" viewBox="0 0 28 14"><path d="M15 11h8v2h-8z" fill="#fff" /></svg></QuickButton>
            <QuickButton aria-label="最大化"><svg width="12" height="12" viewBox="0 0 12 12"><path d="M1 1h10v10H1z" fill="none" stroke="#fff" /></svg></QuickButton>
            <QuickButton aria-label="关闭"><svg width="12" height="12" viewBox="0 0 12 12"><path d="M1 1l10 10M11 1L1 11" fill="none" stroke="#fff" strokeWidth="2" /></svg></QuickButton>
          </TitleRight>
        </TitleBar>

        <MenuRow>
          <Menus>{menus.map((m) => <MenuItem key={m}>{m}</MenuItem>)}</Menus>
          <DocControls>
            <DocButton aria-label="最小化图形"><svg width="12" height="12" viewBox="0 0 12 12"><path d="M2 9h8v2H2z" fill={W} /></svg></DocButton>
            <DocButton aria-label="还原图形"><svg width="12" height="12" viewBox="0 0 12 12"><path d="M1 5h7v6H1zM4 5V1h7v6H8" fill="none" stroke={W} /><path d="M1 5h7v1H1z" fill={W} /></svg></DocButton>
            <DocButton aria-label="关闭图形"><svg width="12" height="12" viewBox="0 0 12 12"><path d="M1 1l10 10M11 1L1 11" fill="none" stroke={W} strokeWidth="2" /></svg></DocButton>
          </DocControls>
        </MenuRow>

        <TabStrip>
          <FileTab $w={130}>开始</FileTab>
          <FileTab $active $w={204}>
            长江航道整治连锁块制作图*
            <button aria-label="关闭选项卡"><svg width="9" height="9" viewBox="0 0 9 9"><path d="M1 1l7 7M8 1L1 8" stroke="#a9aeb5" strokeWidth="2" /></svg></button>
          </FileTab>
          <AddTab aria-label="新图形"><svg width="9" height="9" viewBox="0 0 9 9"><path d="M4 0v9M0 4h9" stroke="#a5a9af" strokeWidth="2" /></svg></AddTab>
        </TabStrip>

        <ToolbarArea>
          <ToolbarRow>
            <Bar><Grip /><Tools items={standard} /></Bar>
            <Bar>
              <Grip />
              <Tools items={["layers"]} />
              <Combo $w={300} $gap={6}>
                <svg width="88" height="18" viewBox="0 0 88 18">
                  <path d="M8 1a5 5 0 0 1 3 9l-1 2H6l-1-2a5 5 0 0 1 3-9z" fill="#f5a01c" /><path d="M6 13h4v3H6z" fill="#8a8c90" />
                  <circle cx="25" cy="9" r="4" fill="#f5a01c" /><path d="M25 1v2M25 15v2M17 9h2M31 9h2M19 3l2 2M29 13l2 2M31 3l-2 2M21 13l-2 2" stroke="#f5a01c" strokeWidth="1" />
                  <path d="M39 2h12M39 2v11M39 13h5M51 2v3" fill="none" stroke="#6a7078" /><circle cx="50" cy="12" r="3" fill={O} /><path d="M50 7v10M45 12h10M47 9l6 6M53 9l-6 6" stroke={O} />
                  <path d="M59 8h10v8H59z" fill="#f0a020" /><path d="M67 8V5c0-4 5-4 5 0v3" fill="none" stroke="#f0a020" strokeWidth="2" />
                  <path d="M76 3h11v12H76z" fill="#fff" stroke="#000" />
                </svg>
                <Picker aria-label="图层"><option>0</option></Picker>
                <Chevron />
              </Combo>
              <Tools items={["layerTop", "layerPrev", "layerState"]} />
            </Bar>
            <Bar>
              <Grip />
              <Combo $w={150}>
                <svg width="14" height="16" viewBox="0 0 14 16"><path d="M1 2h12v12H1z" fill="#fff" stroke="#000" /></svg>
                <Picker aria-label="颜色"><option>ByLayer</option></Picker>
                <Chevron />
              </Combo>
            </Bar>
            <Bar>
              <Split />
              <Combo $w={160} $gap={6}>
                <svg width="60" height="4" viewBox="0 0 60 4"><path d="M0 2h60" stroke="#000" /></svg>
                <Picker aria-label="线型"><option>ByLayer</option></Picker>
                <Chevron />
              </Combo>
            </Bar>
            <Bar>
              <Split />
              <Combo $w={124} $gap={6}>
                <svg width="36" height="4" viewBox="0 0 36 4"><path d="M0 2h36" stroke="#000" /></svg>
                <Picker aria-label="线宽"><option>ByLayer</option></Picker>
                <Chevron />
              </Combo>
            </Bar>
            <Bar>
              <Split />
              <Combo $w={118} $off>
                <Picker $pad={6} aria-label="打印样式" disabled><option>ByColor</option></Picker>
                <Chevron c="#b5b8bc" />
              </Combo>
            </Bar>
          </ToolbarRow>
          <ToolbarRow>
            <Bar><Grip /><Tools items={refEdit} /></Bar>
            <Bar>
              <Grip />
              <Tools items={dims} />
              <Combo $w={122}>
                <Picker $pad={17} aria-label="标注样式"><option>Standard</option></Picker>
                <Chevron />
              </Combo>
              <Tools items={["dimStyle"]} />
            </Bar>
            <Bar><Grip /><Tools items={solids} /></Bar>
          </ToolbarRow>
        </ToolbarArea>

        <Work>
          <SideStrip $w={29}>
            <SideBar>
              <Grip $flat />
              {draw.map((n) => <SideButton key={n} aria-label={n}><Icon n={n} /></SideButton>)}
            </SideBar>
          </SideStrip>
          <Canvas>
            <Drawing />
            <Materials />
            <ViewLabel>[−][俯视][二维线框]</ViewLabel>
            <Compass />
          </Canvas>
          <SideStrip $w={32} $inset={4}>
            <SideBar>
              <Grip $flat />
              {modify.map((n) => <SideButton key={n} aria-label={n}><Icon n={n} /></SideButton>)}
            </SideBar>
          </SideStrip>
        </Work>

        <CommandPanel>
          <CommandSide>
            <Grip $flat />
            <SideTool $h={22} aria-label="关闭命令行"><svg width="10" height="10" viewBox="0 0 10 10"><path d="M1 1l8 8M9 1L1 9" stroke={W} strokeWidth="2" /></svg></SideTool>
            <SideTool $h={25} aria-label="自定义命令行">
              <svg width="16" height="16" viewBox="0 0 16 16"><path d="M1 15l8-8" stroke={W} strokeWidth="3" /><path d="M13 1l-3 3 2 2 3-3c2 4-2 7-5 5L8 7C7 3 10 0 13 1z" fill={W} /></svg>
            </SideTool>
          </CommandSide>
          <div>
            <History>{"命令\uff1a *取消*"}</History>
            <Prompt>
              <svg width="26" height="14" viewBox="0 0 26 14"><path d="M1 1h15v11H1zM1 3h15M3 5l3 2-3 2M7 10h4" fill="none" stroke="#55595f" /><path d="M18 4h8l-4 5z" fill="#6a6e74" /></svg>
              <CommandInput aria-label="命令" placeholder="键入命令" />
            </Prompt>
          </div>
        </CommandPanel>

        <Footer>
          <LayoutTabs>
            <LayoutTab $active $w={46}>模型</LayoutTab>
            <LayoutTab $w={54}>布局1</LayoutTab>
            <LayoutTab $w={54}>布局2</LayoutTab>
            <LayoutTab $w={30} aria-label="新建布局"><svg width="9" height="9" viewBox="0 0 9 9"><path d="M4 0v9M0 4h9" stroke="#a5a9af" strokeWidth="2" /></svg></LayoutTab>
          </LayoutTabs>
          <StatusBar />
        </Footer>
      </Shell>
    </>
  );
}
